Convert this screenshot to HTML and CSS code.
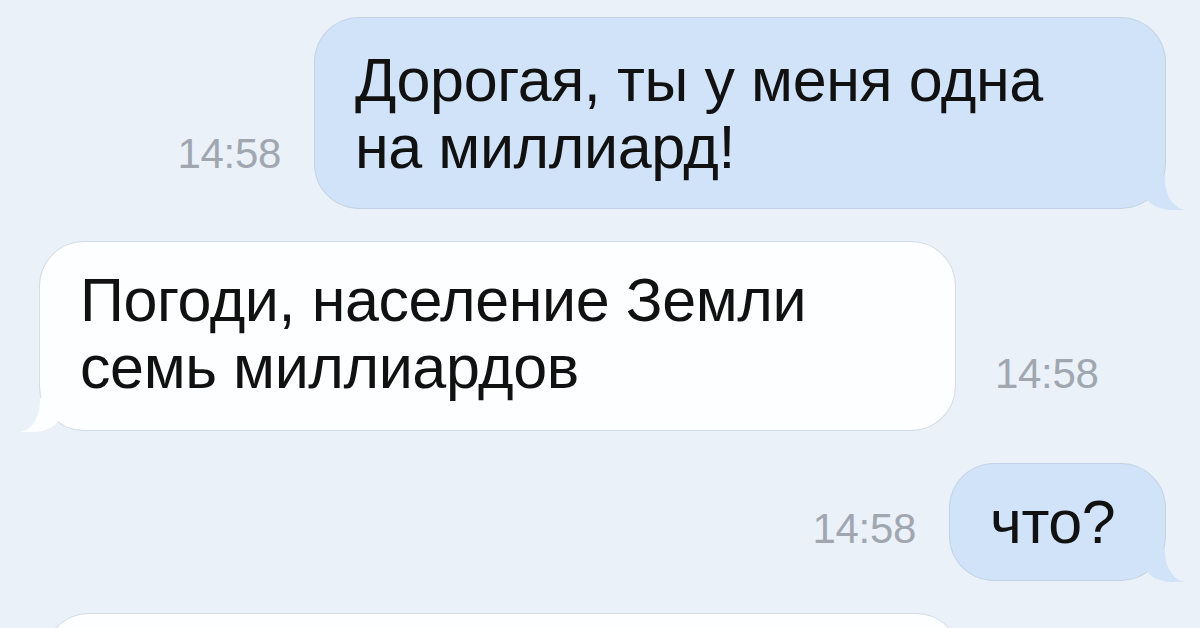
FILE: index.html
```html
<!DOCTYPE html>
<html lang="ru">
<head>
    <meta charset="UTF-8" />
    <title>Сообщения</title>
    <link rel="stylesheet" href="styles.css">
</head>
<body>
    <div class="chat">
        <div class="row out">
            <span class="time">14:58</span>
            <div class="bubble blue b1">Дорогая, ты у меня одна<br>на миллиард!</div>
        </div>
        <div class="row in">
            <div class="bubble white b2">Погоди, население Земли<br>семь миллиардов</div>
            <span class="time">14:58</span>
        </div>
        <div class="row out">
            <span class="time">14:58</span>
            <div class="bubble blue b3">что?</div>
        </div>
        <div class="row in">
            <div class="bubble white b4">&nbsp;</div>
        </div>
    </div>
</body>
</html>
```

FILE: styles.css
```css
html, body {
    margin: 0;
    padding: 0;
    height: 100%;
    overflow: hidden;
}

body {
    background-color: #ebf1f9;
    font-family: "Liberation Sans", Arial, sans-serif;
    color: #111;
}

.chat {
    display: flex;
    flex-direction: column;
    gap: 34px;
    padding: 18px 35px 0 40px;
}

.row {
    display: flex;
    align-items: last baseline;
}

.row.out {
    justify-content: flex-end;
}

.time {
    font-size: 42px;
    color: #a0a7b0;
    letter-spacing: -0.3px;
}

.out .time {
    margin-right: 34px;
}

.in .time {
    margin-left: 40px;
}

.bubble {
    position: relative;
    font-size: 61px;
    line-height: 67px;
    letter-spacing: -0.4px;
    padding: 29px 40px 27px 40px;
    border-radius: 44px;
    box-sizing: border-box;
}

.blue {
    background-color: #d1e3f8;
    box-shadow: 0 0 0 1px #c3d3e5;
}

.white {
    background-color: #fdfeff;
    box-shadow: 0 0 0 1px #d4dce6;
}

/* tails */
.bubble::before,
.bubble::after {
    content: "";
    position: absolute;
    bottom: -2px;
    height: 34px;
}

.blue::before {
    right: -20px;
    width: 44px;
    background-color: #d1e3f8;
    border-bottom-left-radius: 30px 26px;
}

.blue::after {
    right: -44px;
    width: 44px;
    background-color: #ebf1f9;
    border-bottom-left-radius: 22px 30px;
}

.white::before {
    left: -20px;
    width: 44px;
    background-color: #fdfeff;
    border-bottom-right-radius: 30px 26px;
}

.white::after {
    left: -44px;
    width: 44px;
    background-color: #ebf1f9;
    border-bottom-right-radius: 22px 30px;
}

.b1 {
    width: 850px;
}

.b2 {
    width: 915px;
    padding-top: 25px;
    padding-bottom: 29px;
}

.b3 {
    width: 215px;
    padding-top: 25px;
    padding-bottom: 24px;
}

.b4 {
    width: 915px;
    margin-left: 5px;
}
```
